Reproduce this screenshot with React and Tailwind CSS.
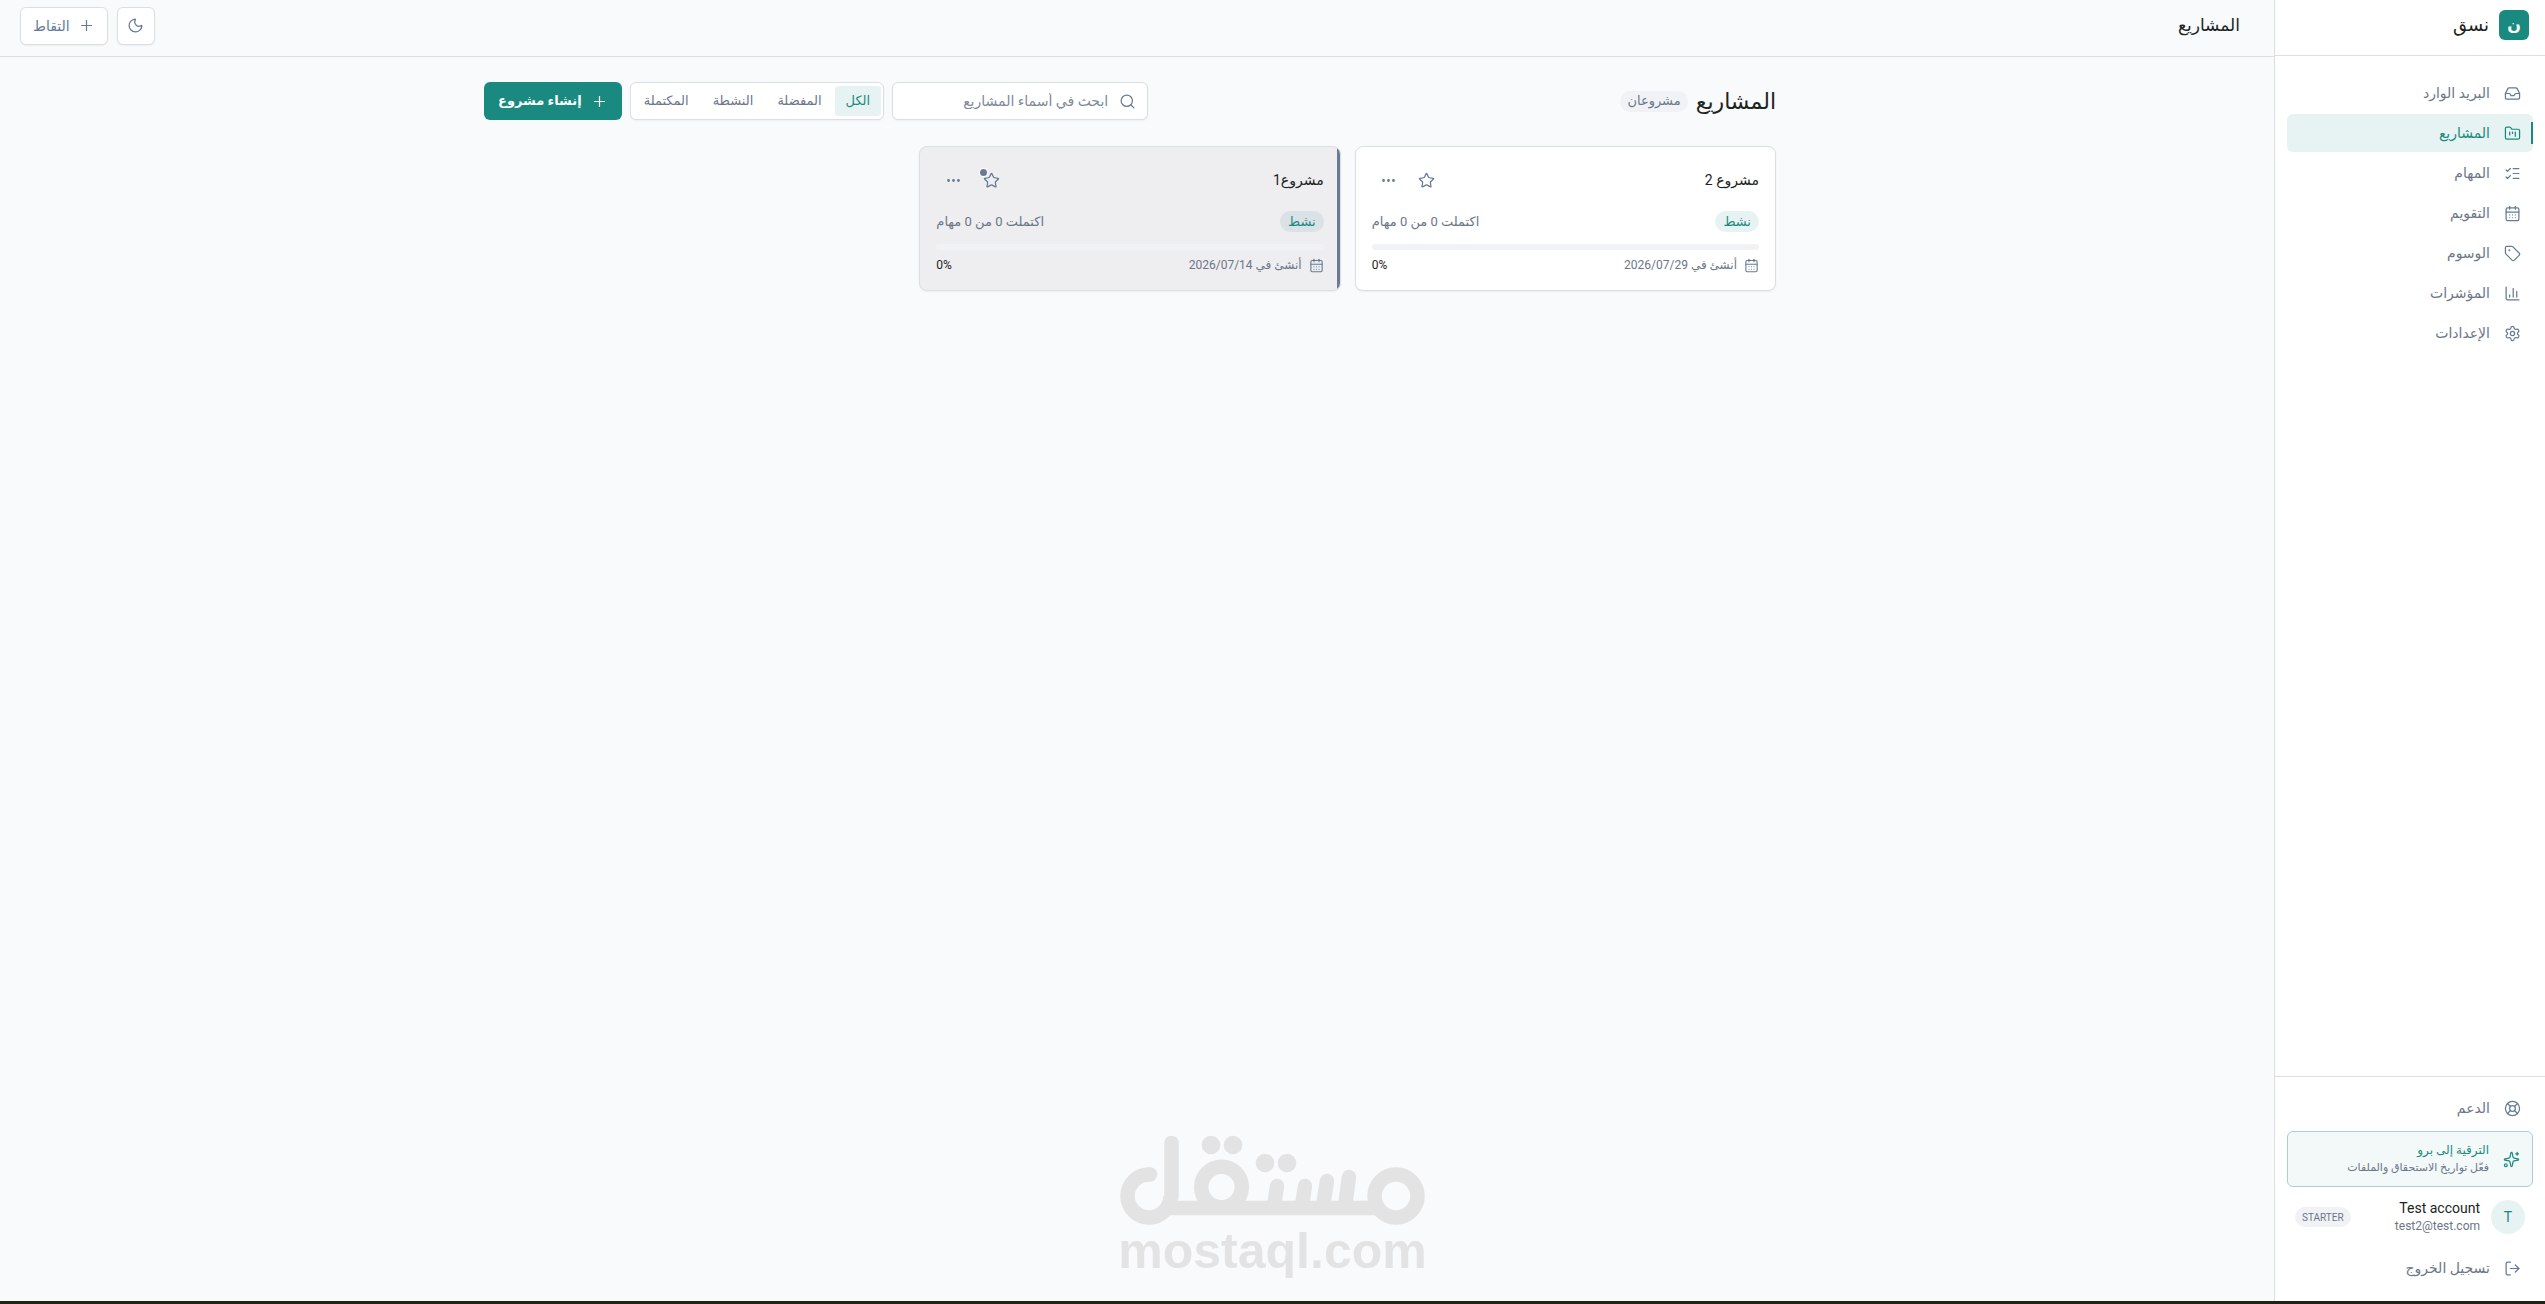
import {
  CalendarDays,
  ChartColumn,
  Ellipsis,
  FolderKanban,
  Inbox,
  LifeBuoy,
  ListChecks,
  LogOut,
  Moon,
  Plus,
  Search,
  Settings,
  Sparkles,
  Star,
  Tag,
} from 'lucide-react';
import { useState } from 'react';

const navItems = [
  { id: 'inbox', label: 'البريد الوارد', icon: Inbox },
  { id: 'projects', label: 'المشاريع', icon: FolderKanban, active: true },
  { id: 'tasks', label: 'المهام', icon: ListChecks },
  { id: 'calendar', label: 'التقويم', icon: CalendarDays },
  { id: 'tags', label: 'الوسوم', icon: Tag },
  { id: 'insights', label: 'المؤشرات', icon: ChartColumn },
  { id: 'settings', label: 'الإعدادات', icon: Settings },
];

const filters = ['الكل', 'المفضلة', 'النشطة', 'المكتملة'];

const projects = [
  { id: 2, name: 'مشروع 2', status: 'نشط', progress: 0, tasks: 'اكتملت 0 من 0 مهام', created: 'أنشئ في 2026/07/29' },
  { id: 1, name: 'مشروع1', status: 'نشط', progress: 0, tasks: 'اكتملت 0 من 0 مهام', created: 'أنشئ في 2026/07/14', selected: true },
];

function NavLink({ label, icon: Icon, active }) {
  return (
    <a
      href="#"
      className={`relative flex h-[38px] items-center gap-[14px] rounded-md px-3 text-sm ${
        active ? 'bg-[#e7f3f2] text-[#1a8a80]' : 'text-[#6b7689]'
      }`}
    >
      {active && <span className="absolute inset-y-2 start-0 w-0.5 bg-[#1a8a80]"></span>}
      <Icon size={17} strokeWidth={1.75} className={active ? '' : 'text-[#647a96]'} />
      <span>{label}</span>
    </a>
  );
}

function Sidebar() {
  return (
    <aside className="flex w-[271px] shrink-0 flex-col border-e border-[#d9dfe5] bg-white">
      <div className="flex h-14 items-center gap-[10px] border-b border-[#d9dfe5] px-4 pb-[5px]">
        <span className="flex size-[30px] items-center justify-center rounded-md bg-[#1a8a80] text-base font-bold text-white">
          ن
        </span>
        <span className="text-lg text-[#1c2422]">نسق</span>
      </div>

      <nav className="flex flex-1 flex-col gap-0.5 px-3 py-[18px]">
        {navItems.map((item) => (
          <NavLink key={item.id} {...item} />
        ))}
      </nav>

      {/* Footer */}
      <div className="border-t border-[#d9dfe5] px-3 pb-[14px] pt-3">
        <NavLink label="الدعم" icon={LifeBuoy} />

        <a href="#" className="mt-1 flex h-14 items-center gap-[14px] rounded-md border border-[#abcdd9] bg-[#f3f9f9] px-3">
          <Sparkles size={17} strokeWidth={1.75} className="shrink-0 text-[#1a8a80]" />
          <span className="flex flex-col">
            <span className="text-xs leading-[18px] text-[#1a8a80]">الترقية إلى برو</span>
            <span className="whitespace-nowrap text-[11px] leading-[18px] text-[#6b7689]">فعّل تواريخ الاستحقاق والملفات</span>
          </span>
        </a>

        <div className="flex h-[60px] items-center gap-[11px] px-2">
          <span className="flex size-[34px] items-center justify-center rounded-full bg-[#e7f3f2] text-sm text-[#1a8a80]">T</span>
          <span className="flex flex-1 flex-col">
            <span className="text-sm leading-[18px] text-[#1c2422]">Test account</span>
            <span className="text-xs leading-[18px] text-[#6b7689]">test2@test.com</span>
          </span>
          <span className="flex h-5 items-center rounded-full bg-[#f0f2f6] px-[7px] text-[10px] text-[#6b7689]">STARTER</span>
        </div>

        <a href="#" className="mt-0.5 flex h-[38px] items-center gap-[14px] rounded-md px-3 text-sm text-[#6b7689]">
          <LogOut size={17} strokeWidth={1.75} className="text-[#647a96]" />
          <span>تسجيل الخروج</span>
        </a>
      </div>
    </aside>
  );
}

function ProjectCard({ project }) {
  return (
    <article
      className={`relative overflow-hidden rounded-lg border border-[#d9dfe5] p-4 shadow-xs ${
        project.selected ? 'bg-[#eeedef]' : 'bg-white'
      }`}
    >
      {project.selected && <span className="absolute inset-y-0 start-0 w-[3px] bg-[#6b7a90]"></span>}

      <div className="flex items-center gap-1">
        <h2 className="flex-1 text-sm text-[#1c2422]">{project.name}</h2>
        <button type="button" aria-label="المفضلة" className="relative flex size-[34px] items-center justify-center text-[#647a96]">
          <Star size={17} strokeWidth={1.75} />
          {project.selected && (
            <span className="absolute left-1.5 top-1.5 size-[7px] rounded-full bg-[#6b7a90] ring-1 ring-white"></span>
          )}
        </button>
        <button type="button" aria-label="المزيد" className="flex size-[34px] items-center justify-center text-[#647a96]">
          <Ellipsis size={17} strokeWidth={2} />
        </button>
      </div>

      <div className="mt-[14px] flex items-center justify-between">
        <span
          className={`flex h-[21px] items-center rounded-full px-2 text-[13px] text-[#1a8a80] ${
            project.selected ? 'bg-[#dbe2e7]' : 'bg-[#e7f3f2]'
          }`}
        >
          {project.status}
        </span>
        <span className="text-[13px] text-[#6b7689]">{project.tasks}</span>
      </div>

      <div className="mt-3 h-1.5 overflow-hidden rounded-full bg-[#f0f2f6]">
        <div className="h-full bg-[#1a8a80]" style={{ width: `${project.progress}%` }}></div>
      </div>

      <div className="mt-1.5 flex h-[18px] items-center justify-between text-xs">
        <span className="flex items-center gap-[7px] text-[#6b7689]">
          <CalendarDays size={15} strokeWidth={1.75} className="text-[#647a96]" />
          {project.created}
        </span>
        <span dir="ltr" className="text-[#1c2422]">{project.progress}%</span>
      </div>
    </article>
  );
}

function Watermark() {
  return (
    <div dir="ltr" className="pointer-events-none fixed inset-x-0 bottom-[29px] flex flex-col items-center text-[#e3e3e4]">
      <svg width="306" height="92" viewBox="0 0 306 92" fill="none" stroke="currentColor" strokeWidth="14.5" aria-hidden="true">
        {/* end loops */}
        <circle cx="276" cy="61" r="21.5" />
        <circle cx="29" cy="61" r="21.5" pathLength="360" strokeDasharray="272 88" />
        <circle cx="101.5" cy="52" r="20.3" />
        {/* baseline */}
        <line x1="48" y1="73" x2="260" y2="73" />
        {/* stems */}
        <g strokeLinecap="round">
          <line x1="51.5" y1="8" x2="51.5" y2="62" />
          <line x1="157" y1="51" x2="154" y2="71" />
          <line x1="185" y1="51" x2="182" y2="71" />
          <line x1="207" y1="46" x2="203" y2="71" />
          <line x1="229" y1="42" x2="225" y2="71" />
          <line x1="29" y1="39.5" x2="30" y2="39.5" />
        </g>
        <g fill="currentColor" stroke="none">
          <circle cx="91" cy="10" r="9.3" />
          <circle cx="113" cy="10" r="9.3" />
          <circle cx="145" cy="28" r="9.3" />
          <circle cx="167" cy="28" r="9.3" />
        </g>
      </svg>
      <span className="font-['Liberation_Sans'] text-[50px] font-bold leading-[48px]">mostaql.com</span>
    </div>
  );
}

export default function App() {
  const [filter, setFilter] = useState(filters[0]);
  const [query, setQuery] = useState('');

  return (
    <div
      dir="rtl"
      lang="ar"
      className="flex min-h-screen border-b-[3px] border-[#20230f] bg-[#f9fafc] font-[Roboto,'DejaVu_Sans',sans-serif]"
    >
      <Sidebar />

      <div className="flex min-w-0 flex-1 flex-col">
        <header className="flex h-[57px] items-center justify-between border-b border-[#d9dfe5] pb-[5px] ps-[34px] pe-5">
          <span className="text-[17px] text-[#1c2422]">المشاريع</span>
          <div className="flex gap-[9px]">
            <button
              type="button"
              aria-label="الوضع الداكن"
              className="flex size-[38px] items-center justify-center rounded-md border border-[#d9dfe5] bg-white text-[#647a96] shadow-xs"
            >
              <Moon size={17} strokeWidth={1.75} />
            </button>
            <button
              type="button"
              className="flex h-[38px] items-center gap-2 rounded-md border border-[#d9dfe5] bg-white px-3 text-sm text-[#647a96] shadow-xs"
            >
              <Plus size={17} strokeWidth={1.75} />
              التقاط
            </button>
          </div>
        </header>

        <main className="ps-[14px] pt-[25px]">
          <div className="mx-auto max-w-[1292px]">
            {/* Toolbar */}
            <div className="flex items-center justify-between">
              <div className="flex items-center gap-2">
                <h1 className="text-[22px] text-[#1c2422]">المشاريع</h1>
                <span className="flex h-[21px] items-center rounded-full bg-[#f0f2f6] px-[7px] text-[13px] text-[#6b7689]">مشروعان</span>
              </div>

              <div className="flex gap-2">
                <label className="flex h-[38px] w-64 items-center gap-[11px] rounded-md border border-[#d9dfe5] bg-white px-[11px] shadow-xs">
                  <Search size={17} strokeWidth={1.75} className="shrink-0 text-[#647a96]" />
                  <input
                    type="search"
                    aria-label="بحث"
                    value={query}
                    onChange={(e) => setQuery(e.target.value)}
                    placeholder="ابحث في أسماء المشاريع"
                    className="min-w-0 flex-1 text-sm outline-none placeholder:text-[#7e899a]"
                  />
                </label>

                <div className="flex h-[38px] items-center gap-0.5 rounded-md border border-[#d9dfe5] bg-white px-0.5 shadow-xs">
                  {filters.map((name) => (
                    <button
                      key={name}
                      type="button"
                      onClick={() => setFilter(name)}
                      className={`h-[30px] rounded px-[11px] text-[13px] ${
                        filter === name ? 'bg-[#e7f3f2] text-[#1a8a80]' : 'text-[#6b7689]'
                      }`}
                    >
                      {name}
                    </button>
                  ))}
                </div>

                <button
                  type="button"
                  className="flex h-[38px] items-center gap-[9px] rounded-md bg-[#1a8a80] px-[14px] text-[13px] font-bold text-white"
                >
                  <Plus size={17} strokeWidth={1.75} />
                  إنشاء مشروع
                </button>
              </div>
            </div>

            {/* Projects grid */}
            <div className="mt-[26px] grid grid-cols-3 gap-[14px]">
              {projects.map((project) => (
                <ProjectCard key={project.id} project={project} />
              ))}
            </div>
          </div>
        </main>
      </div>

      <Watermark />
    </div>
  );
}
